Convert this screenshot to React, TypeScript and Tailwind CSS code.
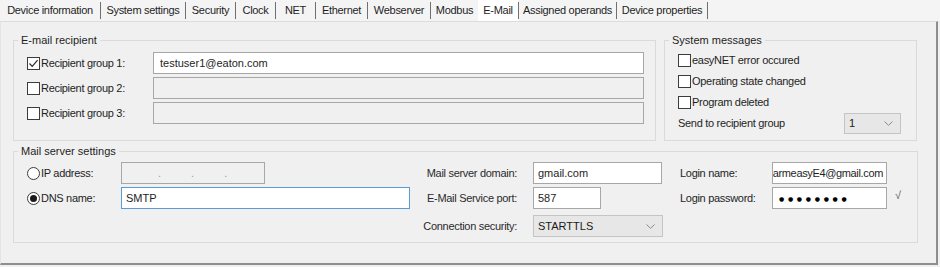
import { ReactNode } from "react";

const tabs = [
  { label: "Device information", w: "w-[100px]" },
  { label: "System settings", w: "w-[84px]" },
  { label: "Security", w: "w-[49px]" },
  { label: "Clock", w: "w-[39px]" },
  { label: "NET", w: "w-[39px]" },
  { label: "Ethernet", w: "w-[51px]" },
  { label: "Webserver", w: "w-[62px]" },
  { label: "Modbus", w: "w-[47px]", noSep: true },
  { label: "E-Mail", w: "w-[40px]", active: true },
  { label: "Assigned operands", w: "w-[97px]" },
  { label: "Device properties", w: "w-[90px]" },
];

function Checkbox({ checked = false }: { checked?: boolean }) {
  return (
    <div className="w-[13px] h-[13px] shrink-0 border border-[#3c3c3c] bg-white flex items-center justify-center">
      {checked && (
        <svg width="11" height="11" viewBox="0 0 11 11">
          <path d="M1.5 5.5 L4.2 8.3 L9.6 2.2" fill="none" stroke="#2b2b2b" strokeWidth="1.2" />
        </svg>
      )}
    </div>
  );
}

function Radio({ selected = false }: { selected?: boolean }) {
  return (
    <div className="w-[13px] h-[13px] shrink-0 rounded-full border border-[#3c3c3c] bg-white flex items-center justify-center">
      {selected && <div className="w-[7px] h-[7px] rounded-full bg-[#1a1a1a]" />}
    </div>
  );
}

function Chevron() {
  return (
    <svg width="9" height="5" viewBox="0 0 9 5">
      <path d="M0.5 0.5 L4.5 4.3 L8.5 0.5" fill="none" stroke="#8a8a8a" strokeWidth="1" />
    </svg>
  );
}

function Field({ children, className = "", disabled = false, focused = false }: { children?: ReactNode; className?: string; disabled?: boolean; focused?: boolean }) {
  const border = focused ? "border-[#5b9bd5]" : "border-[#a7a7a7]";
  const bg = disabled ? "bg-[#f0f0f0]" : "bg-white";
  return (
    <div className={`h-[22px] border ${border} ${bg} flex items-center pl-[4px] pr-[3px] overflow-hidden whitespace-nowrap ${className}`}>
      {children}
    </div>
  );
}

function Combo({ value, className = "" }: { value: string; className?: string }) {
  return (
    <div className={`h-[21px] border border-[#c4c4c4] bg-[#e7e7e7] flex items-center justify-between pl-[4px] pr-[7px] ${className}`}>
      <span className="text-[#1a1a1a]">{value}</span>
      <Chevron />
    </div>
  );
}

function Group({ title, className = "", children }: { title: string; className?: string; children: ReactNode }) {
  return (
    <fieldset className={`border border-[#dadada] shrink-0 ${className}`}>
      <legend className="ml-[4px] px-[3px] leading-[13px] text-[#1e1e1e]">{title}</legend>
      {children}
    </fieldset>
  );
}

export default function App() {
  return (
    <div className="w-[940px] h-[267px] bg-[#f0f0f0] overflow-hidden text-[11px] text-[#1e1e1e] font-['Liberation_Sans',Arial,sans-serif]">
      {/* Tabs */}
      <div className="h-[21px] flex items-center bg-[#f4f4f4]">
        {tabs.map((t) => (
          <div key={t.label} className="flex items-center h-full">
            <div className={`${t.w} h-full flex items-center justify-center whitespace-nowrap tracking-[-0.3px] ${t.active ? "bg-white" : ""}`}>
              {t.label}
            </div>
            {!t.noSep && <div className="w-px h-[17px] bg-[#707070]" />}
          </div>
        ))}
      </div>

      {/* Panel */}
      <div className="w-[938px] h-[244px] border-t border-t-[#dcdcdc] border-l border-l-[#e4e4e4] border-r-2 border-r-[#8e8e8e] border-b-2 border-b-[#8e8e8e] pl-[12px] pt-[12px]">
        <div className="flex gap-[8px]">
          <Group title="E-mail recipient" className="w-[643px] h-[107px]">
            <div className="pl-[13px] pt-[5px] flex flex-col gap-[3px]">
              {[
                { n: 1, checked: true, value: "testuser1@eaton.com" },
                { n: 2, checked: false, value: "" },
                { n: 3, checked: false, value: "" },
              ].map((r) => (
                <div key={r.n} className="flex items-center h-[22px]">
                  <div className="w-[126px] flex items-center">
                    <Checkbox checked={r.checked} />
                    <span className="ml-[1px] tracking-[-0.3px]">Recipient group {r.n}:</span>
                  </div>
                  <Field className="w-[491px] pl-[6px]" disabled={!r.checked}>
                    {r.value}
                  </Field>
                </div>
              ))}
            </div>
          </Group>

          <Group title="System messages" className="w-[253px] h-[107px]">
            <div className="pl-[13px] pr-[15px] pt-[3px] flex flex-col">
              {["easyNET error occured", "Operating state changed", "Program deleted"].map((l) => (
                <div key={l} className="h-[21px] flex items-center">
                  <Checkbox />
                  <span className="ml-[1px] tracking-[-0.3px]">{l}</span>
                </div>
              ))}
              <div className="h-[21px] flex items-center justify-between">
                <span className="tracking-[-0.3px]">Send to recipient group</span>
                <Combo value="1" className="w-[57px]" />
              </div>
            </div>
          </Group>
        </div>

        <Group title="Mail server settings" className="w-[905px] h-[98px] mt-[4px]">
          <div className="pl-[13px] pt-[4px] flex">
            {/* IP / DNS */}
            <div className="w-[383px] flex flex-col gap-[3px]">
              <div className="h-[22px] flex items-center">
                <div className="w-[94px] flex items-center">
                  <Radio />
                  <span className="ml-[1px] tracking-[-0.3px]">IP address:</span>
                </div>
                <Field className="w-[144px] text-[#9a9a9a]" disabled>
                  <span className="ml-[32px]">.</span>
                  <span className="ml-[30px]">.</span>
                  <span className="ml-[30px]">.</span>
                </Field>
              </div>
              <div className="h-[22px] flex items-center">
                <div className="w-[94px] flex items-center">
                  <Radio selected />
                  <span className="ml-[1px] tracking-[-0.3px]">DNS name:</span>
                </div>
                <Field className="w-[289px]" focused>
                  SMTP
                </Field>
              </div>
            </div>

            {/* Server domain / port / security */}
            <div className="ml-[6px] flex flex-col gap-[3px]">
              <div className="h-[22px] flex items-center">
                <span className="w-[101px] text-right tracking-[-0.3px] text-[#2a2a2a]">Mail server domain:</span>
                <Field className="ml-[16px] w-[129px]">gmail.com</Field>
              </div>
              <div className="h-[22px] flex items-center">
                <span className="w-[101px] text-right tracking-[-0.3px] text-[#2a2a2a]">E-Mail Service port:</span>
                <Field className="ml-[16px] w-[68px]">587</Field>
              </div>
              <div className="h-[22px] mt-[3px] flex items-center">
                <span className="w-[101px] text-right tracking-[-0.3px] text-[#2a2a2a]">Connection security:</span>
                <Combo value="STARTTLS" className="ml-[16px] w-[130px] h-[22px]" />
              </div>
            </div>

            {/* Login */}
            <div className="ml-[17px] flex flex-col gap-[3px]">
              <div className="h-[22px] flex items-center">
                <span className="w-[92px] tracking-[-0.3px]">Login name:</span>
                <Field className="w-[115px] justify-end pl-[2px] pr-[2px] tracking-[-0.35px]">armeasyE4@gmail.com</Field>
              </div>
              <div className="h-[22px] flex items-center">
                <span className="w-[92px] tracking-[-0.3px]">Login password:</span>
                <Field className="w-[115px]">
                  <span className="ml-[2px] text-[6px] tracking-[3.7px] text-black font-['DejaVu_Sans',sans-serif]">●●●●●●●●</span>
                </Field>
                <span className="ml-[8px] -mt-[6px] text-[#555]">√</span>
              </div>
            </div>
          </div>
        </Group>
      </div>
    </div>
  );
}
